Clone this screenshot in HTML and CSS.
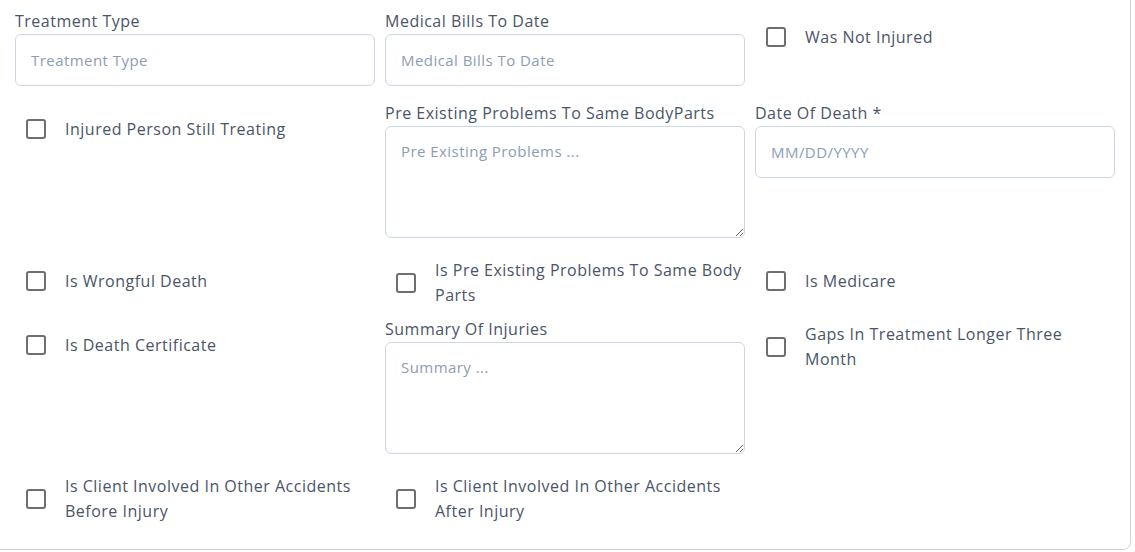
FILE: index.html
```html
<!DOCTYPE html>
<html lang="en">
<head>
<meta charset="utf-8">
<title>Injury Details</title>
<link rel="stylesheet" href="styles.css">
</head>
<body>
<div class="card">
  <div class="form-grid">
    <div class="field">
      <label class="field-label">Treatment Type</label>
      <input class="control" type="text" placeholder="Treatment Type">
    </div>
    <div class="field">
      <label class="field-label">Medical Bills To Date</label>
      <input class="control" type="text" placeholder="Medical Bills To Date">
    </div>
    <label class="check">
      <input class="box" type="checkbox">
      <span class="check-text">Was Not Injured</span>
    </label>

    <label class="check">
      <input class="box" type="checkbox">
      <span class="check-text">Injured Person Still Treating</span>
    </label>
    <div class="field">
      <label class="field-label">Pre Existing Problems To Same BodyParts</label>
      <textarea class="control area" placeholder="Pre Existing Problems ..."></textarea>
    </div>
    <div class="field">
      <label class="field-label">Date Of Death *</label>
      <input class="control" type="text" placeholder="MM/DD/YYYY">
    </div>

    <label class="check">
      <input class="box" type="checkbox">
      <span class="check-text">Is Wrongful Death</span>
    </label>
    <label class="check">
      <input class="box" type="checkbox">
      <span class="check-text">Is Pre Existing Problems To Same Body Parts</span>
    </label>
    <label class="check">
      <input class="box" type="checkbox">
      <span class="check-text">Is Medicare</span>
    </label>

    <label class="check">
      <input class="box" type="checkbox">
      <span class="check-text">Is Death Certificate</span>
    </label>
    <div class="field">
      <label class="field-label">Summary Of Injuries</label>
      <textarea class="control area" placeholder="Summary ..."></textarea>
    </div>
    <label class="check">
      <input class="box" type="checkbox">
      <span class="check-text">Gaps In Treatment Longer Three Month</span>
    </label>

    <label class="check">
      <input class="box" type="checkbox">
      <span class="check-text">Is Client Involved In Other Accidents Before Injury</span>
    </label>
    <label class="check">
      <input class="box" type="checkbox">
      <span class="check-text">Is Client Involved In Other Accidents After Injury</span>
    </label>
  </div>
</div>
</body>
</html>
```
FILE: styles.css
```css
html, body {
  margin: 0;
  padding: 0;
  background: #ffffff;
}

body {
  font-family: "Open Sans", "Noto Sans", sans-serif;
  color: #4a5568;
}

.card {
  margin: -12px 4px 0 -12px;
  padding: 21px 15px 15px 26px;
  border: 1px solid #d3d3d3;
  border-radius: 8px;
  background: #ffffff;
}

.form-grid {
  display: grid;
  grid-template-columns: repeat(3, 1fr);
  column-gap: 10px;
  align-items: start;
}

.field {
  display: flex;
  flex-direction: column;
  margin-bottom: 16px;
}

.field-label {
  font-size: 16px;
  line-height: 22px;
  letter-spacing: 0.5px;
  color: #4a5568;
  margin-bottom: 2px;
  white-space: nowrap;
}

.control {
  box-sizing: border-box;
  width: 100%;
  height: 52px;
  margin: 0;
  padding: 0 15px;
  border: 1px solid #cdd6e4;
  border-radius: 6px;
  background: #ffffff;
  font-family: "Open Sans", "Noto Sans", sans-serif;
  font-size: 15px;
  letter-spacing: 0.45px;
  color: #4a5568;
  outline: none;
}

.control::placeholder {
  color: #8d9cb6;
  opacity: 1;
}

.area {
  display: block;
  height: 112px;
  padding: 13px 15px;
  line-height: 22px;
  resize: vertical;
}

.check {
  display: flex;
  align-items: center;
  gap: 19px;
  min-height: 46px;
  margin-top: 4px;
  margin-bottom: 10px;
  padding-left: 11px;
  cursor: pointer;
}

.box {
  appearance: none;
  -webkit-appearance: none;
  flex: 0 0 auto;
  box-sizing: border-box;
  width: 20px;
  height: 20px;
  margin: 0;
  border: 2px solid #6e6e6e;
  border-radius: 3px;
  background: #ffffff;
}

.check-text {
  font-size: 16px;
  line-height: 25px;
  letter-spacing: 0.5px;
  color: #4a5568;
}
```
